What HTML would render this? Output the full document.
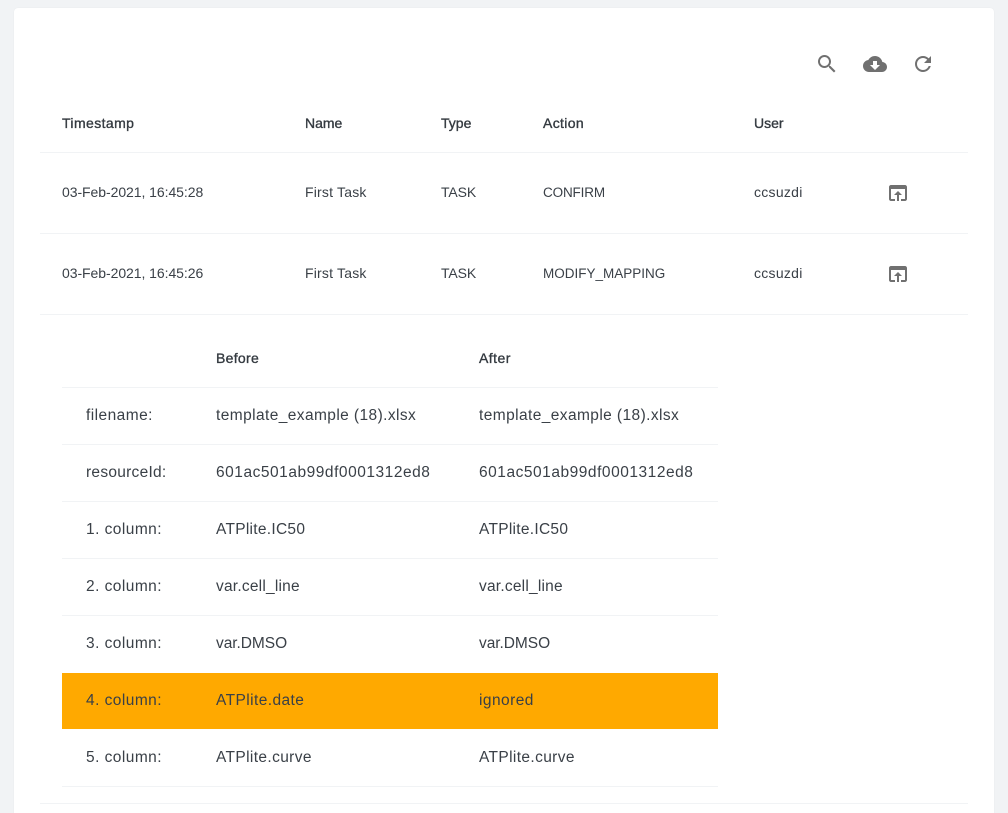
<!DOCTYPE html>
<html><head><meta charset="utf-8"><style>
html,body{margin:0;padding:0;width:1008px;height:813px;overflow:hidden;background:#f1f3f5}
body{font-family:"Liberation Sans",sans-serif;color:#343a40;position:relative}
#card{position:absolute;left:14px;top:8px;width:980px;height:830px;background:#fff;border-radius:4px;box-shadow:0 0 1px rgba(0,0,0,.08)}
.t{position:absolute;white-space:nowrap;line-height:20px;height:20px}
.h{font-size:14px;font-weight:normal;letter-spacing:.1px;-webkit-text-stroke:.35px #343a40;color:#343a40}
.c{font-size:14px;color:#3a4047}
.d{font-size:15.5px;color:#3a4047;letter-spacing:.45px}
.l{position:absolute;height:1px;background:#f1f3f5}
svg{position:absolute;fill:#707070}
#hl{position:absolute;left:62px;top:673px;width:656px;height:56px;background:#ffa900}
</style></head><body>
<div id="card"></div>
<svg style="left:815px;top:52px" width="24" height="24" viewBox="0 0 24 24"><path d="M15.5 14h-.79l-.28-.27C15.41 12.59 16 11.11 16 9.5 16 5.91 13.09 3 9.5 3S3 5.91 3 9.5 5.91 16 9.5 16c1.61 0 3.09-.59 4.23-1.57l.27.28v.79l5 4.99L20.49 19l-4.99-5zm-6 0C7.01 14 5 11.99 5 9.5S7.01 5 9.5 5 14 7.01 14 9.5 11.99 14 9.5 14z"/></svg>
<svg style="left:863px;top:52px" width="24" height="24" viewBox="0 0 24 24"><path d="M19.35 10.04C18.67 6.59 15.64 4 12 4 9.11 4 6.6 5.64 5.35 8.04 2.34 8.36 0 10.91 0 14c0 3.31 2.69 6 6 6h13c2.76 0 5-2.24 5-5 0-2.64-2.05-4.78-4.65-4.96zM17 13l-5 5-5-5h3V9h4v4h3z"/></svg>
<svg style="left:911px;top:52px" width="24" height="24" viewBox="0 0 24 24"><path d="M17.65 6.35C16.2 4.9 14.21 4 12 4c-4.42 0-7.99 3.58-7.99 8s3.57 8 7.99 8c3.73 0 6.84-2.55 7.73-6h-2.08c-.82 2.33-3.04 4-5.65 4-3.31 0-6-2.69-6-6s2.69-6 6-6c1.66 0 3.14.69 4.22 1.78L13 11h7V4l-2.35 2.35z"/></svg>

<div class="t h" style="left:62px;top:113px;letter-spacing:.4px">Timestamp</div>
<div class="t h" style="left:305px;top:113px;letter-spacing:0">Name</div>
<div class="t h" style="left:441px;top:113px;letter-spacing:0">Type</div>
<div class="t h" style="left:543px;top:113px;letter-spacing:.35px">Action</div>
<div class="t h" style="left:754px;top:113px;letter-spacing:0">User</div>
<div class="l" style="left:40px;top:152px;width:928px"></div>

<div class="t c" style="left:62px;top:182px;letter-spacing:-.06px">03-Feb-2021, 16:45:28</div>
<div class="t c" style="left:305px;top:182px;letter-spacing:.2px">First Task</div>
<div class="t c" style="left:441px;top:182px;letter-spacing:-.1px">TASK</div>
<div class="t c" style="left:543px;top:183px;font-size:13.5px;letter-spacing:-.15px">CONFIRM</div>
<div class="t c" style="left:754px;top:182px;letter-spacing:.28px">ccsuzdi</div>
<svg style="left:886px;top:181px" width="24" height="24" viewBox="0 0 24 24"><path d="M19 4H5c-1.11 0-2 .9-2 2v12c0 1.1.89 2 2 2h4v-2H5V8h14v10h-4v2h4c1.1 0 2-.9 2-2V6c0-1.1-.89-2-2-2zm-7 6l-4 4h3v6h2v-6h3l-4-4z"/></svg>
<div class="l" style="left:40px;top:233px;width:928px"></div>

<div class="t c" style="left:62px;top:263px;letter-spacing:-.06px">03-Feb-2021, 16:45:26</div>
<div class="t c" style="left:305px;top:263px;letter-spacing:.2px">First Task</div>
<div class="t c" style="left:441px;top:263px;letter-spacing:-.1px">TASK</div>
<div class="t c" style="left:543px;top:264px;font-size:13.5px;letter-spacing:0">MODIFY_MAPPING</div>
<div class="t c" style="left:754px;top:263px;letter-spacing:.28px">ccsuzdi</div>
<svg style="left:886px;top:262px" width="24" height="24" viewBox="0 0 24 24"><path d="M19 4H5c-1.11 0-2 .9-2 2v12c0 1.1.89 2 2 2h4v-2H5V8h14v10h-4v2h4c1.1 0 2-.9 2-2V6c0-1.1-.89-2-2-2zm-7 6l-4 4h3v6h2v-6h3l-4-4z"/></svg>
<div class="l" style="left:40px;top:314px;width:928px"></div>

<div class="t h" style="left:216px;top:348px;letter-spacing:.3px">Before</div>
<div class="t h" style="left:479px;top:348px;letter-spacing:.45px">After</div>
<div class="l" style="left:62px;top:387px;width:656px"></div>

<div class="t d" style="left:86px;top:406px">filename:</div>
<div class="t d" style="left:216px;top:406px;letter-spacing:.41px">template_example (18).xlsx</div>
<div class="t d" style="left:479px;top:406px;letter-spacing:.41px">template_example (18).xlsx</div>
<div class="l" style="left:62px;top:444px;width:656px"></div>

<div class="t d" style="left:86px;top:463px;letter-spacing:.27px">resourceId:</div>
<div class="t d" style="left:216px;top:463px;letter-spacing:.53px">601ac501ab99df0001312ed8</div>
<div class="t d" style="left:479px;top:463px;letter-spacing:.53px">601ac501ab99df0001312ed8</div>
<div class="l" style="left:62px;top:501px;width:656px"></div>

<div class="t d" style="left:86px;top:520px">1. column:</div>
<div class="t d" style="left:216px;top:520px;letter-spacing:.28px">ATPlite.IC50</div>
<div class="t d" style="left:479px;top:520px;letter-spacing:.28px">ATPlite.IC50</div>
<div class="l" style="left:62px;top:558px;width:656px"></div>

<div class="t d" style="left:86px;top:577px">2. column:</div>
<div class="t d" style="left:216px;top:577px;letter-spacing:.22px">var.cell_line</div>
<div class="t d" style="left:479px;top:577px;letter-spacing:.22px">var.cell_line</div>
<div class="l" style="left:62px;top:615px;width:656px"></div>

<div class="t d" style="left:86px;top:634px">3. column:</div>
<div class="t d" style="left:216px;top:634px;letter-spacing:-.05px">var.DMSO</div>
<div class="t d" style="left:479px;top:634px;letter-spacing:-.05px">var.DMSO</div>

<div id="hl"></div>
<div class="t d" style="left:86px;top:691px">4. column:</div>
<div class="t d" style="left:216px;top:691px;letter-spacing:.42px">ATPlite.date</div>
<div class="t d" style="left:479px;top:691px">ignored</div>

<div class="t d" style="left:86px;top:748px">5. column:</div>
<div class="t d" style="left:216px;top:748px;letter-spacing:.37px">ATPlite.curve</div>
<div class="t d" style="left:479px;top:748px;letter-spacing:.37px">ATPlite.curve</div>
<div class="l" style="left:62px;top:786px;width:656px"></div>
<div class="l" style="left:40px;top:803px;width:928px"></div>
</body></html>
